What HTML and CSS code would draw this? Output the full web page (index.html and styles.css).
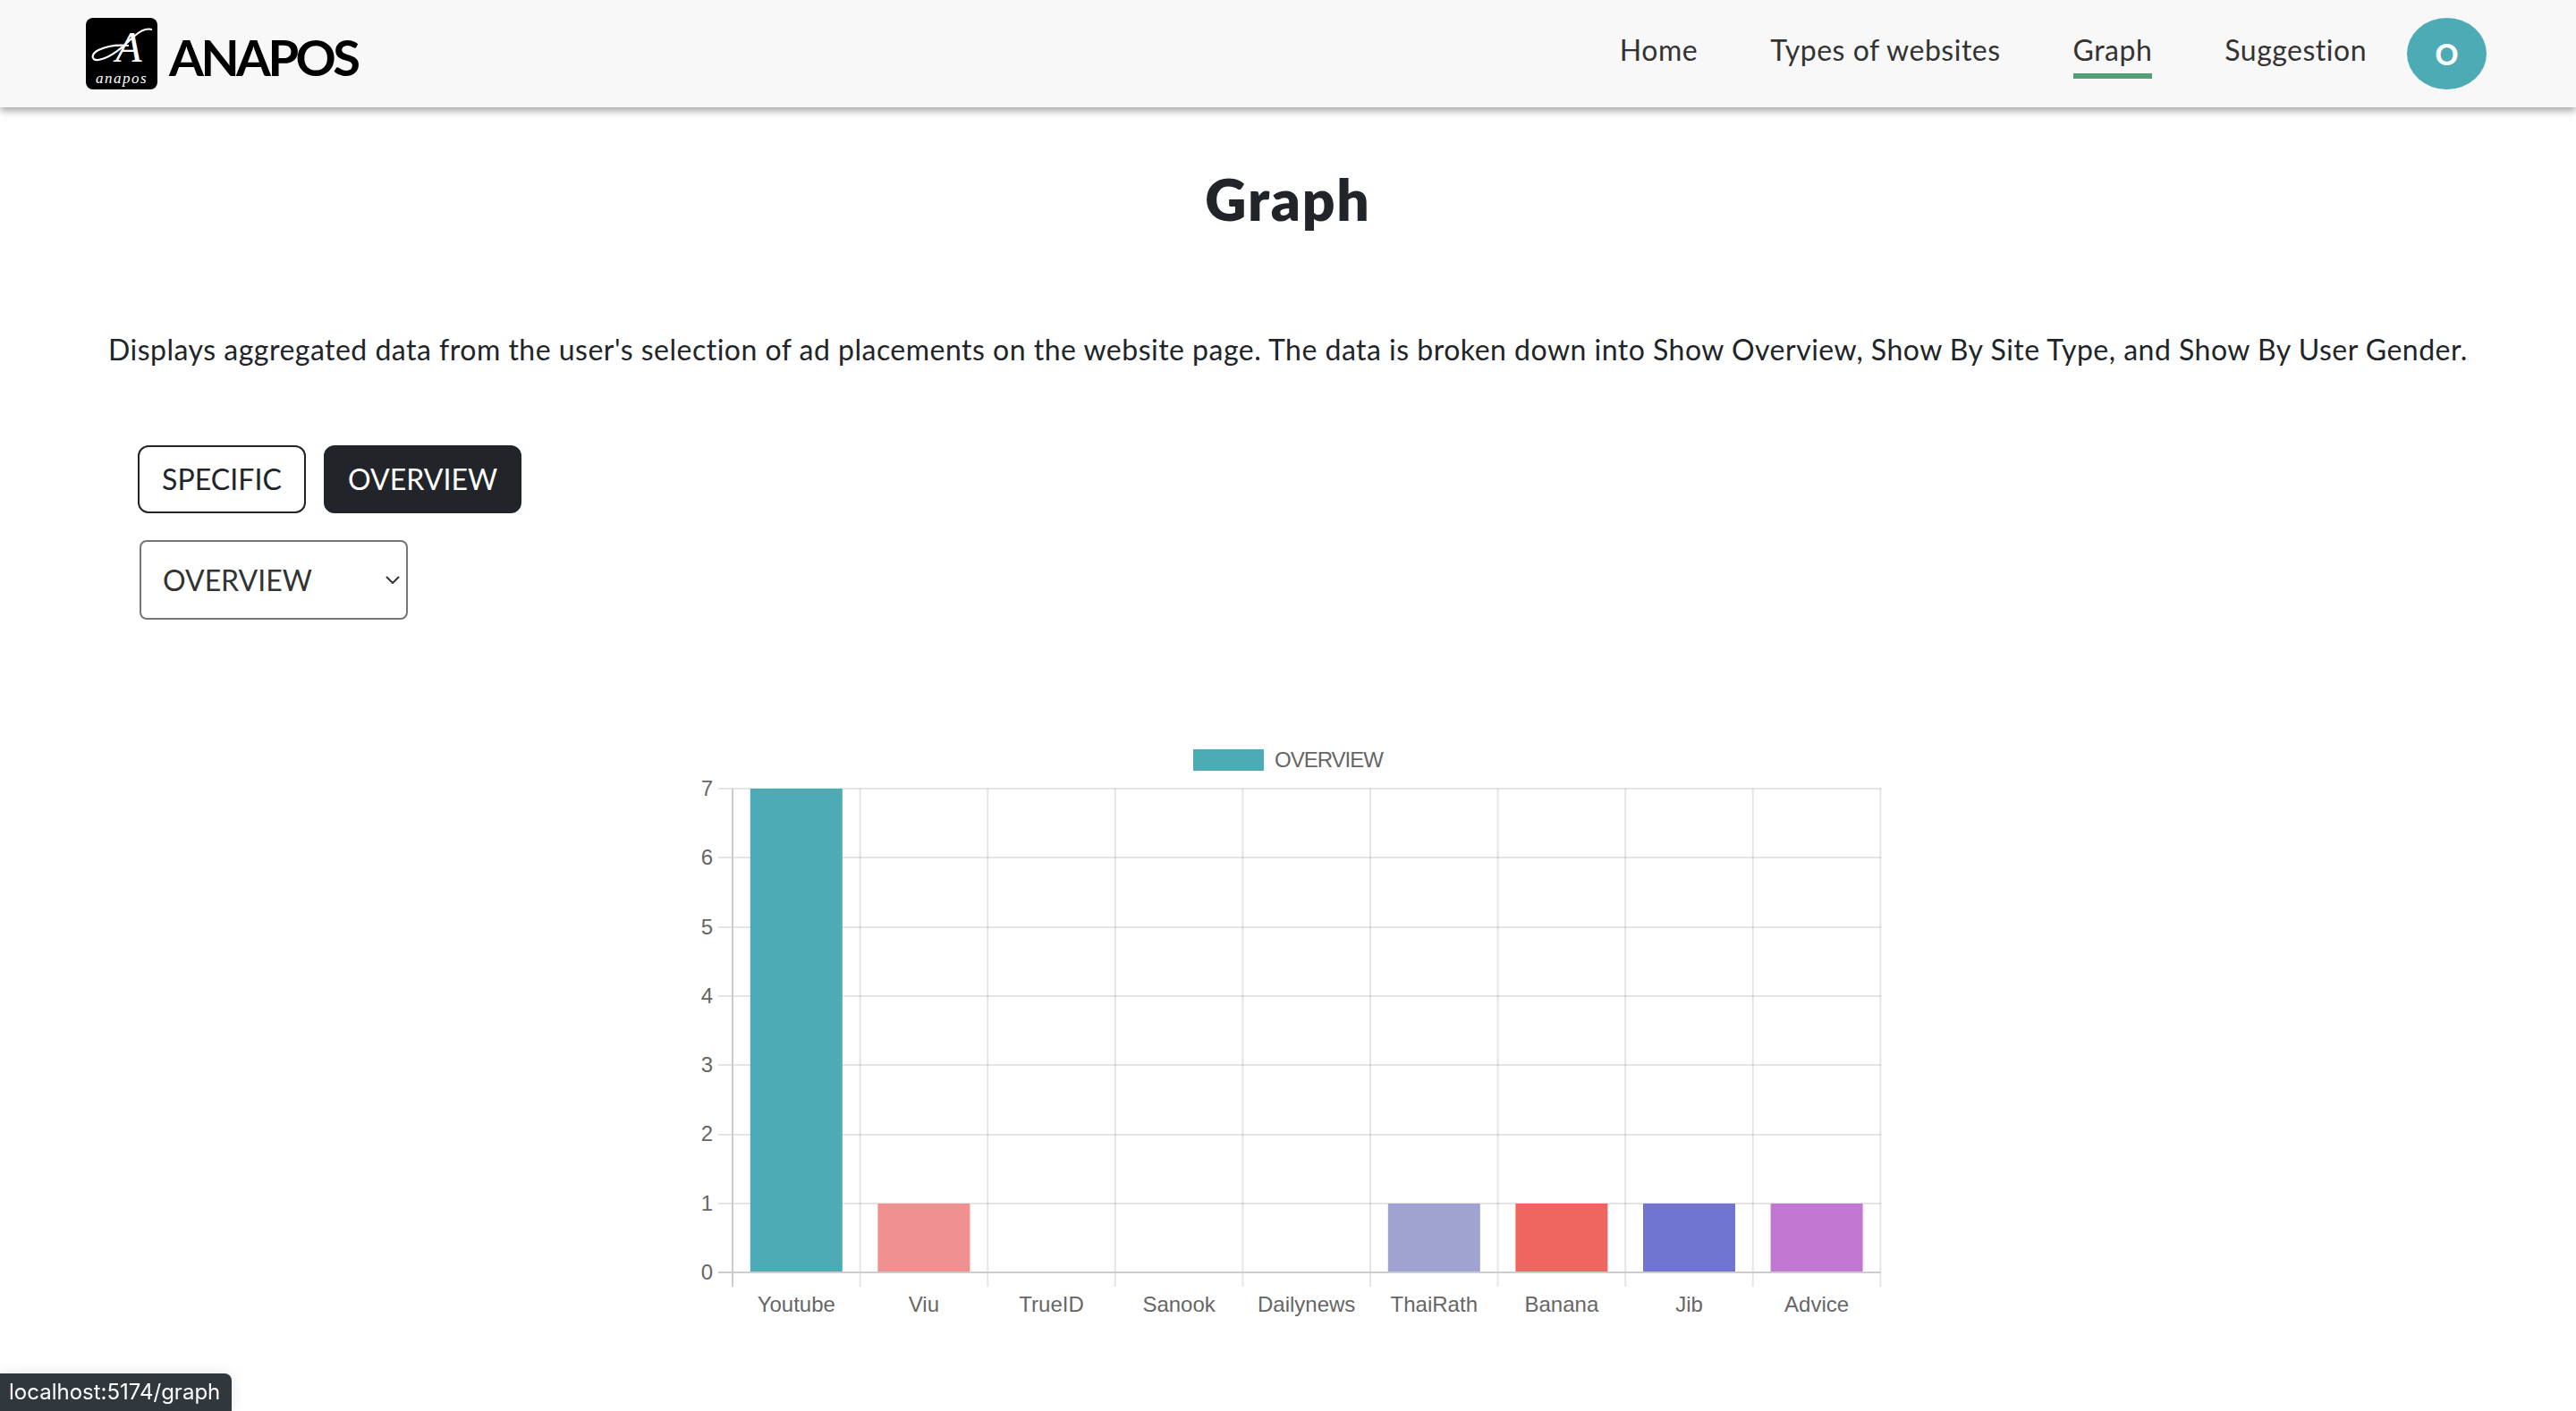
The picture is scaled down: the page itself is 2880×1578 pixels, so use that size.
FILE: index.html
```html
<!DOCTYPE html>
<html lang="en">
<head>
<meta charset="UTF-8">
<meta name="viewport" content="width=device-width, initial-scale=1.0">
<title>Graph</title>
<link rel="stylesheet" href="styles.css">
</head>
<body>
<nav class="navbar">
  <a class="brand" href="#">
    <svg class="brand-logo" viewBox="0 0 80 80">
      <rect width="80" height="80" rx="8" fill="#000"/>
      <path class="logo-swash" d="M74 13C66 11 60 15 50 24C40 34 26 45 14 47C5 48 6 40 14 36C24 31 38 30 48 31"/>
      <text class="logo-letter" x="48" y="49">A</text>
      <text class="logo-small" x="40" y="73">anapos</text>
    </svg>
    <span class="brand-name">ANAPOS</span>
  </a>
  <div class="nav-links">
    <a class="nav-link" href="#">Home</a>
    <a class="nav-link" href="#">Types of websites</a>
    <a class="nav-link active" href="#">Graph</a>
    <a class="nav-link" href="#">Suggestion</a>
  </div>
  <div class="avatar">O</div>
</nav>

<main class="page">
  <h1 class="title">Graph</h1>
  <p class="intro">Displays aggregated data from the user's selection of ad placements on the website page. The data is broken down into Show Overview, Show By Site Type, and Show By User Gender.</p>
  <div class="tabs">
    <button class="tab">SPECIFIC</button>
    <button class="tab tab-dark">OVERVIEW</button>
  </div>
  <div class="select-box">
    <span>OVERVIEW</span>
    <svg class="chevron" viewBox="0 0 16 9"><path d="M1 1l7 7 7-7"/></svg>
  </div>

  <svg class="chart" width="1380" height="660" viewBox="760 820 1380 660">
    <rect x="1334" y="838" width="79" height="24" fill="#4dabb5"/>
    <text class="chart-text legend-label" x="1425" y="858">OVERVIEW</text>

    <g class="grid">
      <line x1="803" x2="2103" y1="882" y2="882"/>
      <line x1="803" x2="2103" y1="959" y2="959"/>
      <line x1="803" x2="2103" y1="1037" y2="1037"/>
      <line x1="803" x2="2103" y1="1114" y2="1114"/>
      <line x1="803" x2="2103" y1="1191" y2="1191"/>
      <line x1="803" x2="2103" y1="1269" y2="1269"/>
      <line x1="803" x2="2103" y1="1346" y2="1346"/>
      <line x1="961.6" x2="961.6" y1="882" y2="1439"/>
      <line x1="1104.2" x2="1104.2" y1="882" y2="1439"/>
      <line x1="1246.8" x2="1246.8" y1="882" y2="1439"/>
      <line x1="1389.4" x2="1389.4" y1="882" y2="1439"/>
      <line x1="1532" x2="1532" y1="882" y2="1439"/>
      <line x1="1674.6" x2="1674.6" y1="882" y2="1439"/>
      <line x1="1817.2" x2="1817.2" y1="882" y2="1439"/>
      <line x1="1959.8" x2="1959.8" y1="882" y2="1439"/>
      <line x1="2102.4" x2="2102.4" y1="882" y2="1439"/>
    </g>
    <g class="axis">
      <line x1="819" x2="819" y1="882" y2="1439"/>
      <line x1="803" x2="2103" y1="1423" y2="1423"/>
    </g>

    <rect x="838.8" y="882" width="103" height="540" fill="#4dabb5"/>
    <rect x="981.4" y="1346" width="103" height="76" fill="#f09090"/>
    <rect x="1551.8" y="1346" width="103" height="76" fill="#9fa3d2"/>
    <rect x="1694.4" y="1346" width="103" height="76" fill="#ef6660"/>
    <rect x="1837" y="1346" width="103" height="76" fill="#7274d2"/>
    <rect x="1979.6" y="1346" width="103" height="76" fill="#c278d3"/>

    <g class="chart-text y-labels">
      <text x="797" y="890">7</text>
      <text x="797" y="967">6</text>
      <text x="797" y="1045">5</text>
      <text x="797" y="1122">4</text>
      <text x="797" y="1199">3</text>
      <text x="797" y="1276">2</text>
      <text x="797" y="1354">1</text>
      <text x="797" y="1431">0</text>
    </g>
    <g class="chart-text x-labels">
      <text x="890.3" y="1467">Youtube</text>
      <text x="1032.9" y="1467">Viu</text>
      <text x="1175.5" y="1467">TrueID</text>
      <text x="1318.1" y="1467">Sanook</text>
      <text x="1460.7" y="1467">Dailynews</text>
      <text x="1603.3" y="1467">ThaiRath</text>
      <text x="1745.9" y="1467">Banana</text>
      <text x="1888.5" y="1467">Jib</text>
      <text x="2031.1" y="1467">Advice</text>
    </g>
  </svg>
</main>

<div class="status-url">localhost:5174/graph</div>
</body>
</html>
```

FILE: styles.css
```css
* {
  box-sizing: border-box;
}
html, body {
  height: 100%;
  overflow: hidden;
}
body {
  margin: 0;
  font-family: Lato, "Open Sans", sans-serif;
  font-size: 32px;
  color: #212529;
  background-color: #fff;
}
a {
  text-decoration: none;
  color: inherit;
}

.navbar {
  display: flex;
  align-items: center;
  height: 120px;
  padding: 0 100px 0 96px;
  background-color: #f8f8f8;
  box-shadow: 0 4px 8px rgba(0, 0, 0, 0.35);
}
.brand {
  display: flex;
  align-items: center;
  gap: 13px;
  margin-right: auto;
}
.brand-logo {
  width: 80px;
  height: 80px;
  display: block;
}
.logo-swash {
  fill: none;
  stroke: #fff;
  stroke-width: 2.2;
}
.logo-letter {
  font-family: "Liberation Serif", serif;
  font-style: italic;
  font-size: 48px;
  fill: #fff;
  text-anchor: middle;
}
.logo-small {
  font-family: "Liberation Serif", serif;
  font-style: italic;
  font-size: 17px;
  letter-spacing: 1.5px;
  fill: #fff;
  text-anchor: middle;
}
.brand-name {
  font-family: Lato, sans-serif;
  font-weight: 700;
  font-size: 56px;
  line-height: 1;
  color: #000;
  letter-spacing: -3.5px;
  margin-top: 8px;
}

.nav-links {
  display: flex;
  gap: 81px;
  margin-right: 45px;
}
.nav-link {
  position: relative;
  color: #333;
  line-height: 44px;
  margin-top: -8px;
  letter-spacing: 0.5px;
}
.nav-link.active::after {
  content: "";
  position: absolute;
  left: 0;
  right: 0;
  bottom: -10px;
  height: 6px;
  background-color: #52a077;
}
.avatar {
  width: 89px;
  height: 80px;
  border-radius: 50%;
  background-color: #4dabb5;
  color: #fff;
  font-size: 32px;
  font-weight: 900;
  display: flex;
  align-items: center;
  justify-content: center;
}

.page {
  display: flex;
  flex-direction: column;
}
.title {
  margin: 64px 0 0;
  font-size: 64px;
  line-height: 77px;
  font-weight: 800;
  letter-spacing: 1.8px;
  text-align: center;
}
.intro {
  margin: 106px 0 0;
  line-height: 48px;
  letter-spacing: 0.49px;
  text-align: center;
  white-space: nowrap;
}
.tabs {
  display: flex;
  gap: 20px;
  margin: 83px 0 0 154px;
}
.tab {
  height: 76px;
  padding: 0 25px 2px;
  font: inherit;
  letter-spacing: 0.07px;
  color: #212529;
  background: #fff;
  border: 2px solid #212529;
  border-radius: 12px;
}
.tab-dark {
  color: #fff;
  background: #212529;
}
.select-box {
  display: flex;
  align-items: center;
  justify-content: space-between;
  align-self: flex-start;
  width: 300px;
  height: 89px;
  margin: 30px 0 0 156px;
  padding: 0 7px 0 24px;
  color: #333;
  border: 2px solid #767676;
  border-radius: 8px;
}
.chevron {
  width: 16px;
  height: 9px;
  fill: none;
  stroke: #333;
  stroke-width: 2;
}

.chart {
  display: block;
  margin: 127px 0 0 760px;
}
.chart-text {
  font-family: "Liberation Sans", Arial, sans-serif;
  font-size: 24px;
  fill: #666;
}
.legend-label {
  letter-spacing: -1px;
}
.grid line {
  stroke: rgba(0, 0, 0, 0.1);
  stroke-width: 2;
}
.axis line {
  stroke: #ccc;
  stroke-width: 2;
}
.y-labels text {
  text-anchor: end;
}
.x-labels text {
  text-anchor: middle;
}

.status-url {
  position: fixed;
  left: 0;
  bottom: 0;
  width: 259px;
  height: 42px;
  padding-left: 10px;
  font-family: Inter, sans-serif;
  font-size: 24px;
  line-height: 42px;
  white-space: nowrap;
  color: #fff;
  background-color: #30373d;
  border-radius: 0 8px 0 0;
  box-shadow: 0 0 16px rgba(0, 0, 0, 0.1);
}
```
